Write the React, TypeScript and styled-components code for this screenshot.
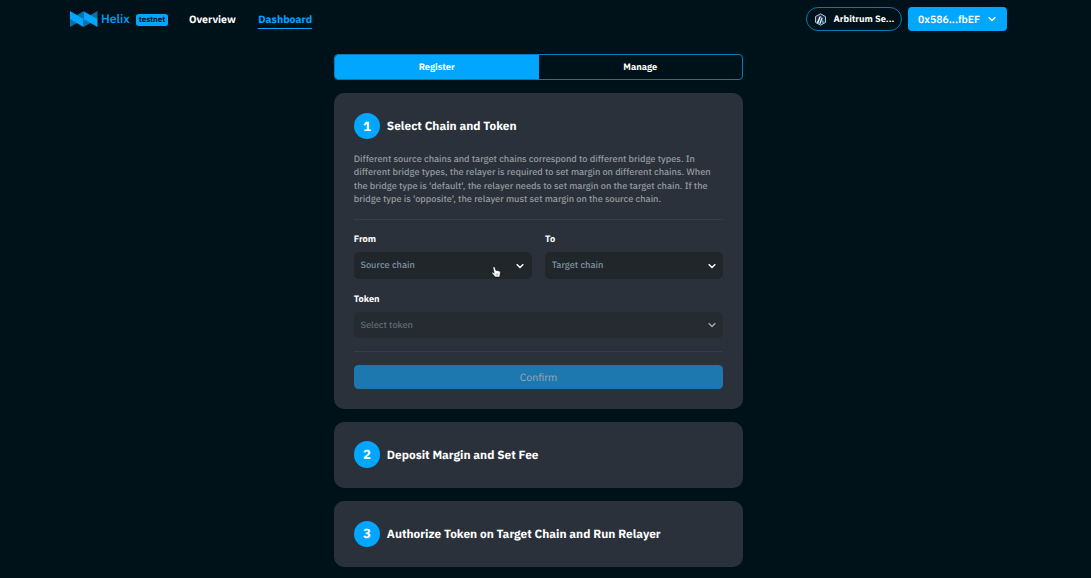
import React from "react";
import styled, { createGlobalStyle } from "styled-components";

const blue = "#00a6ff";

const GlobalStyle = createGlobalStyle`
  * { box-sizing: border-box; }
  body {
    margin: 0;
    height: 578px;
    overflow: hidden;
    background: #001219;
    color: #fff;
    font-family: "IBM Plex Sans", Roboto, "Liberation Sans", sans-serif;
    font-size: 10px;
    line-height: 13.2px;
    text-rendering: geometricPrecision;
  }
  button { text-rendering: inherit; }
`;

const Label = styled.span<{ $size?: number; $weight?: number; $color?: string }>`
  font-size: ${(p) => p.$size ?? 9.24}px;
  font-weight: ${(p) => p.$weight ?? 700};
  color: ${(p) => p.$color ?? "inherit"};
  white-space: nowrap;
`;

const Header = styled.header`
  display: flex;
  align-items: center;
  justify-content: space-between;
  height: 38px;
  padding: 0 84px 0 69px;
`;

const Group = styled.div<{ $gap: number }>`
  display: flex;
  align-items: center;
  gap: ${(p) => p.$gap}px;
`;

const Brand = styled.div`
  display: flex;
  align-items: center;
  width: 99px;
  height: 20px;
`;

const BrandName = styled.div`
  display: flex;
  padding-top: 2px;
`;

const LogoMark = styled.svg`
  width: 29px;
  height: 18px;
  margin-right: 3px;
`;

const Badge = styled.span`
  display: flex;
  align-items: center;
  justify-content: center;
  width: 32px;
  height: 12px;
  margin: 2px 0 0 auto;
  padding-top: 1px;
  border-radius: 2.5px;
  background: ${blue};
  color: #001219;
`;

const NavLink = styled.a<{ $active?: boolean }>`
  display: flex;
  align-items: center;
  height: 20px;
  padding-top: 3px;
  border-bottom: 1.4px solid ${(p) => (p.$active ? blue : "transparent")};
  color: ${(p) => (p.$active ? blue : "#fff")};
`;

const ChainButton = styled.button`
  display: flex;
  align-items: center;
  gap: 6.5px;
  width: 96px;
  height: 24px;
  padding: 0 0 0 7px;
  border: 1px solid #0879b9;
  border-radius: 12px;
  background: transparent;
  color: #fff;
  font-family: inherit;
`;

const WalletButton = styled.button`
  display: flex;
  align-items: center;
  justify-content: space-between;
  width: 99px;
  height: 24px;
  padding: 0 10px;
  border: 0;
  border-radius: 4px;
  background: ${blue};
  color: #fff;
  font-family: inherit;
`;

const Main = styled.main`
  display: flex;
  flex-direction: column;
  gap: 13.3px;
  width: 409px;
  margin: 15.7px 0 0 334px;
`;

const Tabs = styled.div`
  display: grid;
  grid-template-columns: 1fr 1fr;
  height: 26.5px;
  border: 1px solid #0879b9;
  border-radius: 4px;
  overflow: hidden;
`;

const Tab = styled.div<{ $active?: boolean }>`
  display: flex;
  align-items: center;
  justify-content: center;
  padding-top: 1.6px;
  background: ${(p) => (p.$active ? blue : "transparent")};
`;

const Card = styled.section<{ $height: number }>`
  display: flex;
  flex-direction: column;
  gap: 13.2px;
  height: ${(p) => p.$height}px;
  padding: 19.5px 19.8px;
  border-radius: 10px;
  background: #2a313a;
`;

const StepTitle = styled.div`
  display: flex;
  align-items: center;
  gap: 6.6px;
  height: 26.4px;
`;

const StepName = styled.div`
  display: flex;
  padding-top: 1.6px;
`;

const StepNumber = styled.span`
  display: flex;
  align-items: center;
  justify-content: center;
  width: 26.4px;
  height: 26.4px;
  border-radius: 50%;
  background: ${blue};
`;

const Description = styled.div`
  display: flex;
  flex-direction: column;
  padding-top: 0.7px;
  margin-bottom: -0.5px;
`;

const Divider = styled.div`
  height: 1px;
  margin-bottom: -0.4px;
  background: #363d47;
`;

const FieldRow = styled.div`
  display: grid;
  grid-template-columns: 1fr 1fr;
  gap: 13.2px;
`;

const Field = styled.div`
  display: flex;
  flex-direction: column;
  gap: 6px;
  padding-top: 0.6px;
`;

const SelectBox = styled.div<{ $disabled?: boolean }>`
  display: flex;
  align-items: center;
  justify-content: space-between;
  position: relative;
  height: 26.4px;
  padding: 0.8px 6.6px 0;
  border-radius: 5px;
  background: ${(p) => (p.$disabled ? "#252b31" : "#20262a")};
`;

const Confirm = styled.button`
  display: flex;
  align-items: center;
  justify-content: center;
  height: 23.8px;
  border: 0;
  border-radius: 4.5px;
  background: #1c78ae;
  font-family: inherit;
`;

const Pointer = styled.svg`
  position: absolute;
  left: 137px;
  top: 14px;
  width: 10px;
  height: 12px;
`;

const Chevron = ({ color = "#fff" }: { color?: string }) => (
  <svg width="10" height="10" viewBox="0 0 10 10" fill="none">
    <path d="M1.7 3.2 5 6.5 8.3 3.2" stroke={color} strokeWidth="1.4" />
  </svg>
);

const HelixMark = () => (
  <LogoMark viewBox="0 0 29 18">
    <path d="M1 9 14.5 1.2V9.2L1 17z" fill="#0a6fab" />
    <path d="M14.5 9 28.5 1V9L14.5 17z" fill="#0a6fab" />
    <path d="M1 1 14.5 9V17L1 9z" fill={blue} />
    <path d="M14.5 1.2 28.5 9V17L14.5 9z" fill={blue} />
  </LogoMark>
);

const ArbitrumIcon = () => (
  <svg width="13" height="13" viewBox="0 0 13 13">
    <path d="M6.5.8 11.5 3.6V9.4L6.5 12.2 1.5 9.4V3.6z" fill="#213147" stroke="#9dcced" strokeWidth="1" strokeLinejoin="round" />
    <path d="M5.7 3.2H7L4.2 10.4 2.9 9.6zM7.8 4.1 8.5 5.6 6.4 11 5.2 10.7z" fill="#fff" />
    <path d="M8.6 6.8 10.2 9.5 8.4 10.6 7.6 9z" fill="#28a0f0" />
  </svg>
);

const lines = [
  "Different source chains and target chains correspond to different bridge types. In",
  "different bridge types, the relayer is required to set margin on different chains. When",
  "the bridge type is 'default', the relayer needs to set margin on the target chain. If the",
  "bridge type is 'opposite', the relayer must set margin on the source chain.",
];

const Step = ({ n, title }: { n: number; title: string }) => (
  <StepTitle>
    <StepNumber><Label $size={13.2}>{n}</Label></StepNumber>
    <StepName><Label $size={11.88}>{title}</Label></StepName>
  </StepTitle>
);

export default function App() {
  return (
    <>
      <GlobalStyle />
      <Header>
        <Group $gap={21}>
          <Brand>
            <HelixMark />
            <BrandName><Label $size={12.2} $weight={500} $color={blue}>Helix</Label></BrandName>
            <Badge><Label $size={7.92}>testnet</Label></Badge>
          </Brand>
          <Group $gap={22.4}>
            <NavLink><Label $size={10.56}>Overview</Label></NavLink>
            <NavLink $active><Label $size={10.56}>Dashboard</Label></NavLink>
          </Group>
        </Group>
        <Group $gap={6}>
          <ChainButton><ArbitrumIcon /><Label>Arbitrum Se...</Label></ChainButton>
          <WalletButton><Label $size={10.45} $weight={600}>0x586...fbEF</Label><Chevron /></WalletButton>
        </Group>
      </Header>
      <Main>
        <Tabs>
          <Tab $active><Label>Register</Label></Tab>
          <Tab><Label>Manage</Label></Tab>
        </Tabs>
        <Card $height={315.2}>
          <Step n={1} title="Select Chain and Token" />
          <Description>
            {lines.map((text) => (
              <Label key={text} $weight={500} $color="#959a9f">{text}</Label>
            ))}
          </Description>
          <Divider />
          <FieldRow>
            <Field>
              <Label>From</Label>
              <SelectBox>
                <Label $weight={500} $color="#7d92a2">Source chain</Label>
                <Chevron />
                <Pointer viewBox="0 0 10 12">
                  <path d="M2.6.8c.8-.3 1.2.2 1.4.8l.8 2.6 3.5.8c1 .3 1.2 1 1 2L8.7 11H4.2L1 7.2c-.4-.8.3-1.3 1-.9l1.2.9L2 2C1.9 1.4 2.1 1 2.6.8z" fill="#fff" stroke="#111" strokeWidth=".6" />
                  <path d="M5.2 7.5v2M6.7 7.5v2" stroke="#555" strokeWidth=".5" />
                </Pointer>
              </SelectBox>
            </Field>
            <Field>
              <Label>To</Label>
              <SelectBox>
                <Label $weight={500} $color="#7d92a2">Target chain</Label>
                <Chevron />
              </SelectBox>
            </Field>
          </FieldRow>
          <Field>
            <Label>Token</Label>
            <SelectBox $disabled>
              <Label $weight={500} $color="#5f6b75">Select token</Label>
              <Chevron color="#a5a8ab" />
            </SelectBox>
          </Field>
          <Divider />
          <Confirm><Label $size={10.56} $weight={400} $color="#9ca6af">Confirm</Label></Confirm>
        </Card>
        <Card $height={66}><Step n={2} title="Deposit Margin and Set Fee" /></Card>
        <Card $height={66}><Step n={3} title="Authorize Token on Target Chain and Run Relayer" /></Card>
      </Main>
    </>
  );
}
